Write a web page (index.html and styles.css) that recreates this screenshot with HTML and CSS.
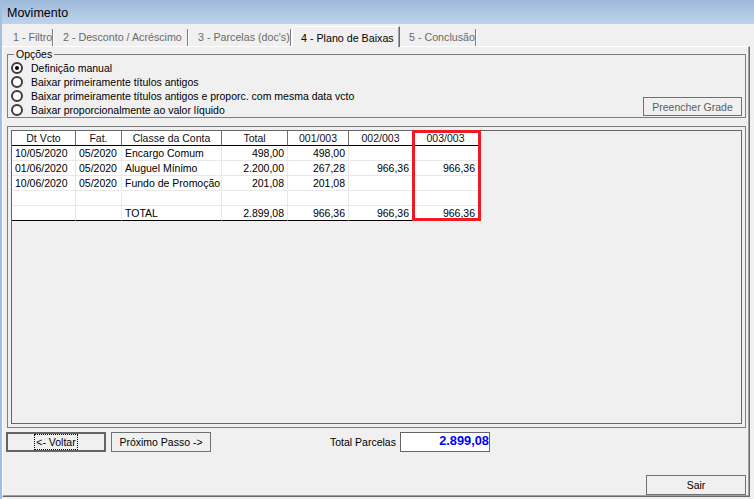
FILE: index.html
```html
<!DOCTYPE html>
<html lang="pt">
<head>
<meta charset="utf-8">
<title>Movimento</title>
<link rel="stylesheet" href="styles.css">
</head>
<body>
<div class="window">
  <div class="titlebar">Movimento</div>
  <div class="tabbar">
    <div class="tab tab-1">1 - Filtro</div>
    <div class="tab tab-2">2 - Desconto / Acréscimo</div>
    <div class="tab tab-3">3 - Parcelas (doc's)</div>
    <div class="tab tab-4 active">4 - Plano de Baixas</div>
    <div class="tab tab-5">5 - Conclusão</div>
  </div>
  <div class="page">
    <div class="groupbox">
      <span class="legend">Opções</span>
      <div class="radios">
        <div class="radio"><span class="circle checked"></span>Definição manual</div>
        <div class="radio"><span class="circle"></span>Baixar primeiramente títulos antigos</div>
        <div class="radio"><span class="circle"></span>Baixar primeiramente títulos antigos e proporc. com mesma data vcto</div>
        <div class="radio"><span class="circle"></span>Baixar proporcionalmente ao valor líquido</div>
      </div>
      <div class="btn btn-fill">Preencher Grade</div>
    </div>
    <div class="gridframe">
      <div class="gridinner">
        <div class="tablewrap">
          <table class="grid">
            <colgroup>
              <col class="c-date"><col class="c-fat"><col class="c-class"><col class="c-total"><col class="c-p1"><col class="c-p2"><col class="c-p3">
            </colgroup>
            <thead>
              <tr><th>Dt Vcto</th><th>Fat.</th><th>Classe da Conta</th><th>Total</th><th>001/003</th><th>002/003</th><th>003/003</th></tr>
            </thead>
            <tbody>
              <tr><td>10/05/2020</td><td>05/2020</td><td>Encargo Comum</td><td class="num">498,00</td><td class="num">498,00</td><td class="num"></td><td class="num"></td></tr>
              <tr><td>01/06/2020</td><td>05/2020</td><td>Aluguel Mínimo</td><td class="num">2.200,00</td><td class="num">267,28</td><td class="num">966,36</td><td class="num">966,36</td></tr>
              <tr><td>10/06/2020</td><td>05/2020</td><td>Fundo de Promoção</td><td class="num">201,08</td><td class="num">201,08</td><td class="num"></td><td class="num"></td></tr>
              <tr><td></td><td></td><td></td><td></td><td></td><td></td><td></td></tr>
              <tr class="totalrow"><td></td><td></td><td>TOTAL</td><td class="num">2.899,08</td><td class="num">966,36</td><td class="num">966,36</td><td class="num">966,36</td></tr>
            </tbody>
          </table>
          <div class="highlight"></div>
        </div>
      </div>
    </div>
    <div class="navrow">
      <div class="btn btn-back"><span class="focus">&lt;- Voltar</span></div>
      <div class="btn btn-next">Próximo Passo -&gt;</div>
      <span class="total-label">Total Parcelas</span>
      <div class="total-box">2.899,08</div>
    </div>
    <div class="exitrow">
      <div class="btn btn-exit">Sair</div>
    </div>
  </div>
</div>
</body>
</html>
```

FILE: styles.css
```css
* { box-sizing: border-box; }
html, body { margin: 0; padding: 0; }
body {
  width: 754px;
  height: 499px;
  overflow: hidden;
  background: #f0f0f0;
  font-family: "Liberation Sans", Arial, sans-serif;
  font-size: 10.5px;
  color: #000;
}
.window {
  display: flex;
  flex-direction: column;
  height: 499px;
  border-left: 2px solid #a3bfdf;
}
.titlebar {
  height: 24px;
  background: linear-gradient(#9db9d9, #bed4ed);
  font-size: 12.5px;
  line-height: 15px;
  padding: 6px 0 0 5px;
  color: #000;
}
.tabbar {
  height: 22px;
  display: flex;
  align-items: flex-end;
  padding-left: 2px;
}
.tab {
  height: 17px;
  line-height: 17px;
  padding: 0 0 0 9px;
  font-size: 10.7px;
  color: #6a6a6a;
  white-space: nowrap;
  overflow: hidden;
  border-right: 1px solid #7c7c7c;
  box-shadow: 1px 0 0 #ffffff;
  margin-right: 1px;
}
.tab-1 { width: 49px; }
.tab-2 { width: 134px; }
.tab-3 { width: 102px; }
.tab-4 { width: 108px; }
.tab-5 { width: 76px; }
.tab.active {
  height: 21px;
  line-height: 16px;
  padding: 3px 0 0 8px;
  margin-right: 0;
  margin-bottom: -1px;
  color: #000;
  background: #f0f0f0;
  border-top: 1px solid #ffffff;
  border-left: 1px solid #ffffff;
  border-right: 1px solid #696969;
  box-shadow: inset -1px 0 0 #a0a0a0;
  position: relative;
}
.page {
  flex: 1;
  display: flex;
  flex-direction: column;
  margin: 0 4px 2px 0;
  border-top: 1px solid #ffffff;
  border-left: 1px solid #ffffff;
  border-right: 1px solid #696969;
  border-bottom: 1px solid #696969;
  box-shadow: inset -1px -1px 0 #a0a0a0;
}
.groupbox {
  position: relative;
  display: flex;
  height: 64px;
  margin: 7px 3px 0 4px;
  border: 1px solid #7e7e7e;
}
.legend {
  position: absolute;
  top: -8px;
  left: 6px;
  padding: 0 2px;
  line-height: 14px;
  background: #f0f0f0;
}
.radios {
  flex: 1;
  padding: 6px 0 0 3px;
}
.radio {
  display: flex;
  align-items: center;
  height: 14px;
  white-space: nowrap;
}
.circle {
  position: relative;
  width: 12px;
  height: 12px;
  margin-right: 8px;
  border-radius: 50%;
  border: 2px solid #3c3c3c;
  background: #ffffff;
  flex: none;
}
.circle.checked::after {
  content: "";
  position: absolute;
  left: 2px;
  top: 2px;
  width: 4px;
  height: 4px;
  border-radius: 50%;
  background: #000;
}
.btn {
  display: flex;
  align-items: center;
  justify-content: center;
  height: 20px;
  border: 1px solid #707070;
  background: #f0f0f0;
  white-space: nowrap;
}
.btn-fill {
  align-self: flex-end;
  width: 99px;
  height: 19px;
  margin: 0 3px 1px 0;
  color: #5c5c5c;
}
.gridframe {
  display: flex;
  height: 302px;
  margin: 8px 3px 0 4px;
  padding: 3px;
  border: 1px solid #7e7e7e;
}
.gridinner {
  flex: 1;
  border: 1px solid #666666;
}
.tablewrap {
  position: relative;
  width: 467px;
}
.grid {
  border-collapse: separate;
  border-spacing: 0;
  table-layout: fixed;
  width: 467px;
}
.c-date { width: 64px; }
.c-fat { width: 46px; }
.c-class { width: 100px; }
.c-total { width: 66px; }
.c-p1 { width: 61px; }
.c-p2 { width: 64px; }
.c-p3 { width: 66px; }
.grid th,
.grid td {
  height: 15px;
  padding: 0 3px;
  line-height: 14px;
  white-space: nowrap;
  overflow: hidden;
  background: #ffffff;
  font-size: 10.5px;
}
.grid th {
  font-weight: normal;
  text-align: center;
  color: #111;
  border-right: 1px solid #6e6e6e;
  border-bottom: 1px solid #000;
}
.grid td {
  text-align: left;
  border-right: 1px solid #e8e8e8;
  border-bottom: 1px solid #e8e8e8;
}
.grid td.num { text-align: right; }
.grid .totalrow td { border-bottom: 1px solid #000; }
.highlight {
  position: absolute;
  left: 400px;
  top: -1px;
  width: 69px;
  height: 91px;
  border: 3px solid #ed1c24;
}
.navrow {
  display: flex;
  align-items: center;
  height: 20px;
  margin: 4px 0 0 3px;
}
.btn-back {
  width: 100px;
  border: 2px solid #646464;
}
.focus {
  border: 1px dotted #000;
  padding: 0 1px;
  line-height: 14px;
}
.btn-next {
  width: 100px;
  margin-left: 5px;
}
.total-label {
  margin-left: 119px;
  white-space: nowrap;
}
.total-box {
  width: 90px;
  height: 20px;
  margin-left: 4px;
  padding-right: 0;
  background: #ffffff;
  border: 1px solid #646464;
  text-align: right;
  color: #0000ff;
  font-weight: bold;
  font-size: 12.8px;
  line-height: 16px;
}
.exitrow {
  margin-top: auto;
  display: flex;
  justify-content: flex-end;
  padding: 0 3px 1px 0;
}
.btn-exit {
  width: 100px;
}
```
